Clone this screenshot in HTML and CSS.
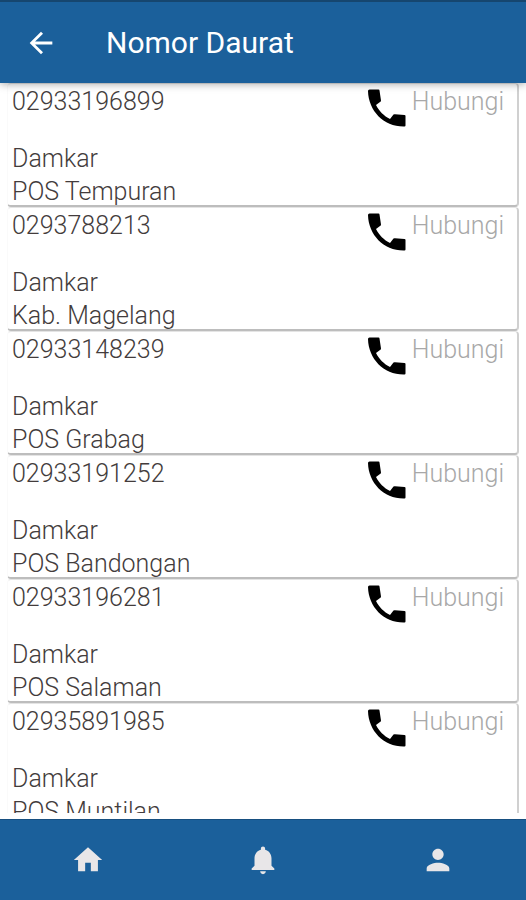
FILE: index.html
```html
<!DOCTYPE html>
<html lang="id">
<head>
    <meta charset="UTF-8">
    <meta name="viewport" content="width=device-width, initial-scale=1.0">
    <title>Nomor Daurat</title>
    <link rel="stylesheet" href="styles.css">
</head>
<body>
    <!-- shared icons -->
    <svg class="sprite" aria-hidden="true">
        <symbol id="phone" viewBox="0 0 38 38">
            <path d="M1.500 0.500H10.500Q11.500 0.500 11.500 1.500L13 11.500Q13 12.500 12 13L8 16C11 22 16 27 22 30L25.500 25.500Q26 25 27 25.200L36.500 26Q37.500 26 37.500 27V36.500Q37.500 37.500 36.500 37.500C16 38 0.500 22 0 2Q0 0.500 1.500 0.500Z"/>
        </symbol>
    </svg>

    <header class="topbar">
        <button class="back" type="button" aria-label="Kembali">
            <svg class="back-icon" viewBox="0 0 24 24">
                <path d="M20 11H7.830l5.590-5.590L12 4l-8 8 8 8 1.410-1.410L7.830 13H20v-2z"/>
            </svg>
        </button>
        <h1>Nomor Daurat</h1>
    </header>

    <main class="list">
        <article class="card">
            <div class="info">
                <p class="number">02933196899</p>
                <p>Damkar</p>
                <p>POS Tempuran</p>
            </div>
            <a class="call" href="tel:02933196899"><svg class="call-icon"><use href="#phone"/></svg>Hubungi</a>
        </article>
        <article class="card">
            <div class="info">
                <p class="number">0293788213</p>
                <p>Damkar</p>
                <p>Kab. Magelang</p>
            </div>
            <a class="call" href="tel:0293788213"><svg class="call-icon"><use href="#phone"/></svg>Hubungi</a>
        </article>
        <article class="card">
            <div class="info">
                <p class="number">02933148239</p>
                <p>Damkar</p>
                <p>POS Grabag</p>
            </div>
            <a class="call" href="tel:02933148239"><svg class="call-icon"><use href="#phone"/></svg>Hubungi</a>
        </article>
        <article class="card">
            <div class="info">
                <p class="number">02933191252</p>
                <p>Damkar</p>
                <p>POS Bandongan</p>
            </div>
            <a class="call" href="tel:02933191252"><svg class="call-icon"><use href="#phone"/></svg>Hubungi</a>
        </article>
        <article class="card">
            <div class="info">
                <p class="number">02933196281</p>
                <p>Damkar</p>
                <p>POS Salaman</p>
            </div>
            <a class="call" href="tel:02933196281"><svg class="call-icon"><use href="#phone"/></svg>Hubungi</a>
        </article>
        <article class="card">
            <div class="info">
                <p class="number">02935891985</p>
                <p>Damkar</p>
                <p>POS Muntilan</p>
            </div>
            <a class="call" href="tel:02935891985"><svg class="call-icon"><use href="#phone"/></svg>Hubungi</a>
        </article>
    </main>

    <nav class="tabs">
        <a href="#beranda" aria-label="Beranda">
            <svg class="tab-icon" viewBox="0 0 24 24"><path d="M10 20v-6h4v6h5v-8h3L12 3 2 12h3v8z"/></svg>
        </a>
        <a href="#notifikasi" aria-label="Notifikasi">
            <svg class="tab-icon" viewBox="0 0 24 24"><path d="M12 22c1.100 0 2-.900 2-2h-4c0 1.100.890 2 2 2zm6-6v-5c0-3.070-1.640-5.640-4.500-6.320V4c0-.830-.670-1.500-1.500-1.500s-1.500.670-1.500 1.500v.680C7.630 5.360 6 7.920 6 11v5l-2 2v1h16v-1l-2-2z"/></svg>
        </a>
        <a href="#profil" aria-label="Profil">
            <svg class="tab-icon" viewBox="0 0 24 24"><path d="M12 12c2.210 0 4-1.790 4-4s-1.790-4-4-4-4 1.790-4 4 1.790 4 4 4zm0 2c-2.670 0-8 1.340-8 4v2h16v-2c0-2.660-5.330-4-8-4z"/></svg>
        </a>
    </nav>
</body>
</html>
```

FILE: styles.css
```css
* {
    box-sizing: border-box;
}
body {
    display: flex;
    flex-direction: column;
    height: 100vh;
    margin: 0;
    font-family: Roboto, "Liberation Sans", sans-serif;
    background-color: #fff;
}
h1, p {
    margin: 0;
}
.sprite {
    display: none;
}
.topbar {
    display: flex;
    flex: none;
    align-items: center;
    gap: 48px;
    height: 83px;
    padding: 0 24px;
    border-top: 2px solid #16466f;
    background-color: #1b609b;
    color: #fff;
    box-shadow: 0 1px 8px rgba(0,0,0,0.35);
    z-index: 1;
}
.topbar h1 {
    font-size: 30px;
    font-weight: 400;
}
.back {
    display: flex;
    padding: 0;
    border: 0;
    background: none;
}
.back-icon {
    width: 34px;
    height: 34px;
    fill: #fff;
}
.list {
    flex: 1;
    min-height: 0;
    margin-bottom: 6px;
    padding: 0 7px;
    overflow: hidden;
}
.card {
    display: flex;
    justify-content: space-between;
    align-items: flex-start;
    padding: 5px 13px 0 4px;
    border: 1px solid #e4e4e4;
    border-right: 2px solid #d0d0d0;
    border-bottom: 2px solid #bdbdbd;
    border-left-color: #fafafa;
    border-radius: 4px;
    font-size: 25px;
    font-weight: 300;
    line-height: 26px;
    color: #433c3c;
}
.info {
    display: flex;
    flex-direction: column;
    gap: 7px;
}
.number {
    margin-bottom: 24px;
}
.call {
    display: flex;
    align-items: flex-start;
    gap: 6px;
    color: #a8a8a8;
    text-decoration: none;
}
.call-icon {
    width: 38px;
    height: 38px;
    fill: #000;
}
.tabs {
    display: flex;
    flex: none;
    height: 81px;
    border-top: 1px solid #174f80;
    background-color: #1b609b;
}
.tabs a {
    display: flex;
    flex: 1;
    align-items: center;
    justify-content: center;
}
.tab-icon {
    width: 34px;
    height: 34px;
    fill: #e8e6e8;
}
```
